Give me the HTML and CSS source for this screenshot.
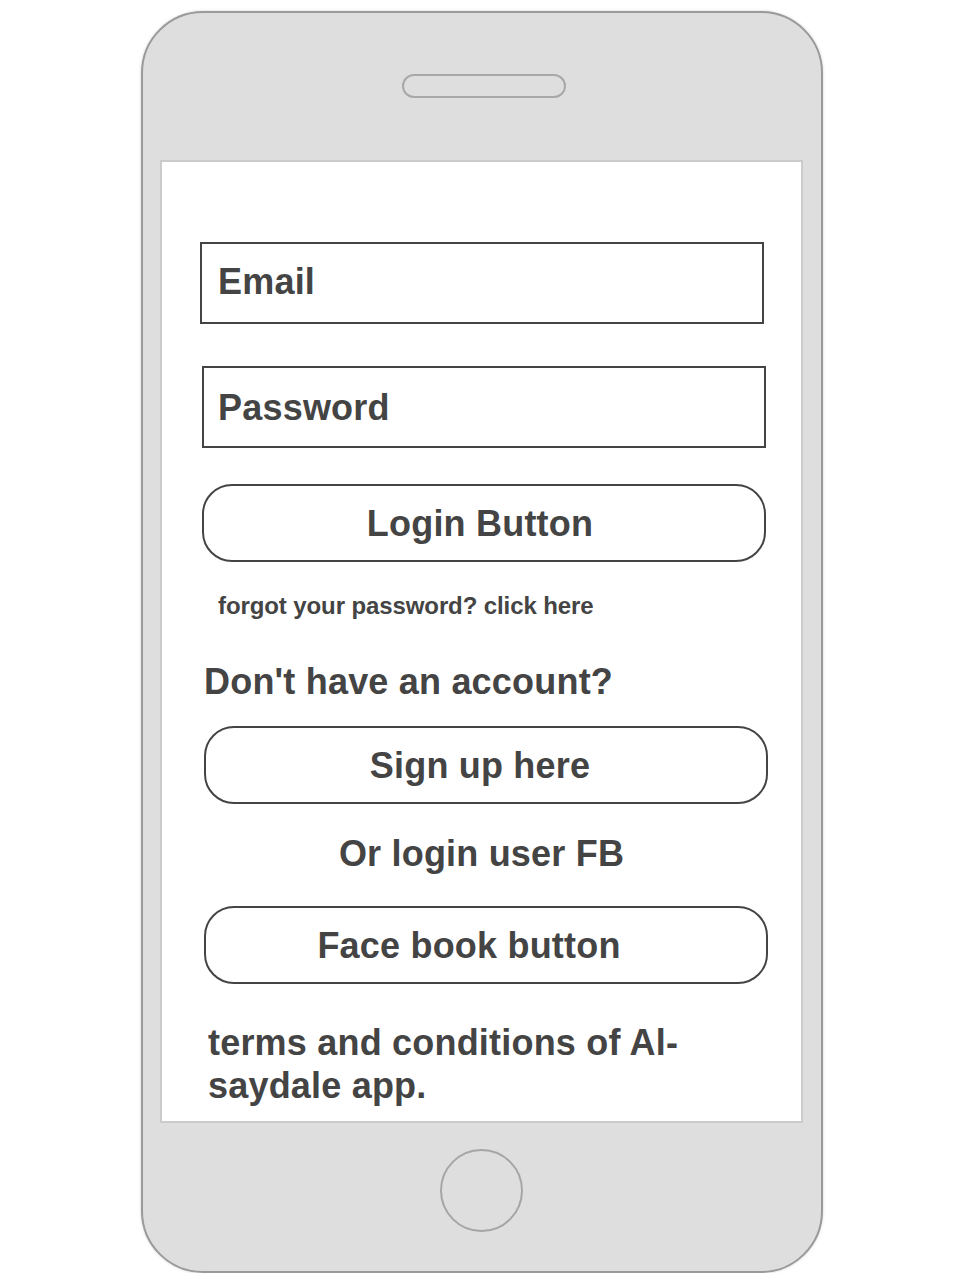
FILE: index.html
```html
<!DOCTYPE html>
<html>
<head>
<meta charset="utf-8">
<link rel="stylesheet" href="styles.css">
</head>
<body>
<div class="phone">
  <div class="top"><div class="speaker"></div></div>
  <div class="screen">
    <div class="field email">Email</div>
    <div class="field password">Password</div>
    <div class="btn login"><span class="shift">Login Button</span></div>
    <div class="forgot">forgot your password? click here</div>
    <div class="noacc">Don't have an account?</div>
    <div class="btn signup"><span class="shift2">Sign up here</span></div>
    <div class="orfb">Or login user FB</div>
    <div class="btn fb"><span class="shift3">Face book button</span></div>
    <div class="terms">terms and conditions of Al-saydale app.</div>
  </div>
  <div class="bottom"><div class="home"></div></div>
</div>
</body>
</html>
```
FILE: styles.css
```css
html, body { margin: 0; padding: 0; background: #fff; }
body { font-family: "Liberation Sans", Arial, sans-serif; font-weight: bold; color: #444; }

.phone {
  box-sizing: border-box;
  margin: 11px 0 0 141px;
  width: 682px;
  height: 1262px;
  background: #dedede;
  border: 2px solid #9a9a9a;
  border-radius: 62px;
  box-shadow: 0 0 3px rgba(0,0,0,0.18);
  padding: 0 18px 0 17px;
  display: flex;
  flex-direction: column;
}
.top { height: 147px; display: flex; justify-content: center; padding-top: 61px; box-sizing: border-box; }
.speaker {
  box-sizing: border-box;
  width: 164px; height: 24px;
  border: 2px solid #a8a8a8;
  border-radius: 12px;
  margin-left: 5px;
}
.screen {
  box-sizing: border-box;
  width: 643px; height: 963px;
  background: #fff;
  border: 2px solid #cbcbcb;
  display: flex;
  flex-direction: column;
  align-items: flex-start;
  letter-spacing: 0.2px;
}
.field {
  box-sizing: border-box;
  width: 564px; height: 82px;
  border: 2px solid #444;
  font-size: 36px;
  display: flex; align-items: center;
  padding-left: 16px;
}
.email { margin: 80px 0 0 38px; padding-bottom: 2px; }
.password { margin: 42px 0 0 40px; padding-left: 14px; padding-top: 2px; }
.btn {
  box-sizing: border-box;
  width: 564px; height: 78px;
  border: 2px solid #444;
  border-radius: 30px;
  font-size: 36px;
  display: flex; align-items: center; justify-content: center;
  padding-top: 2px;
}
.login { margin: 36px 0 0 40px; }
.shift { margin-right: 8px; }
.shift2 { margin-right: 12px; }
.shift3 { margin-right: 34px; }
.forgot { margin: 30px 0 0 56px; font-size: 24px; line-height: 28px; letter-spacing: -0.1px; }
.noacc { margin: 41px 0 0 42px; font-size: 36px; line-height: 42px; }
.signup { margin: 23px 0 0 42px; }
.orfb { margin-top: 29px; align-self: stretch; text-align: center; font-size: 36px; line-height: 42px; }
.fb { margin: 31px 0 0 42px; }
.terms { margin: 37px 0 0 46px; width: 560px; font-size: 36px; line-height: 43px; }
.bottom { flex: 1; display: flex; justify-content: center; padding-top: 26px; box-sizing: border-box; }
.home {
  box-sizing: border-box;
  width: 83px; height: 83px;
  border: 2px solid #a5a5a5;
  border-radius: 50%;
}
```
